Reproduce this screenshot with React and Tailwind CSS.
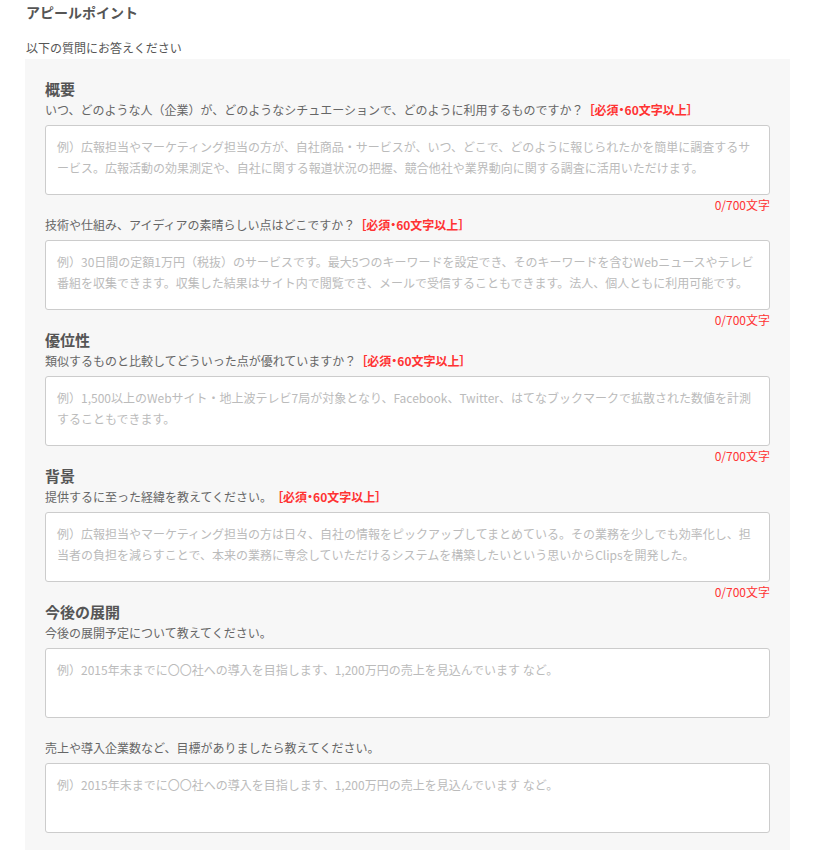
import React from "react";

const font = { fontFamily: '"Noto Sans CJK JP", "Noto Sans", sans-serif' };

function Req() {
  return (
    <span className="ml-[5px] font-bold text-[#ff3333] [font-feature-settings:'palt']">
      ［必須・60文字以上］
    </span>
  );
}

function Field({ question, required, placeholder, counter = true }) {
  return (
    <div className="flex flex-col">
      <div className="h-[20px] leading-[20px] text-[12px] text-[#666]">
        {question}
        {required && <Req />}
      </div>
      <textarea
        readOnly
        placeholder={placeholder}
        className="mt-[5px] h-[70px] w-full resize-none rounded-[3px] border border-[#cccccc] bg-white px-[11px] py-[10px] text-[12px] leading-[21px] text-[#555] placeholder:text-[#bbbbbb] outline-none"
        style={font}
      />
      <div className="h-[20px] text-right text-[12px] leading-[20px] text-[#ff3333]">
        {counter ? "0/700文字" : ""}
      </div>
    </div>
  );
}

function Heading({ children }) {
  return <div className="h-[21px] text-[15px] font-bold leading-[20px] text-[#555]">{children}</div>;
}

export default function App() {
  return (
    <div className="min-h-[850px] bg-white" style={font}>
      <div className="pl-[26px] pt-[2px] h-[22px] text-[14px] font-bold leading-[20px] text-[#555]">
        アピールポイント
      </div>
      <div className="pl-[26px] mt-[16px] h-[20px] text-[12px] leading-[20px] text-[#555]">
        以下の質問にお答えください
      </div>
      <div className="ml-[25px] mt-[1px] w-[765px] bg-[#f7f7f7] px-[20px] pt-[20px] pb-[20px]">
        <Heading>概要</Heading>
        <Field
          required
          question="いつ、どのような人（企業）が、どのようなシチュエーションで、どのように利用するものですか？"
          placeholder="例）広報担当やマーケティング担当の方が、自社商品・サービスが、いつ、どこで、どのように報じられたかを簡単に調査するサービス。広報活動の効果測定や、自社に関する報道状況の把握、競合他社や業界動向に関する調査に活用いただけます。"
        />
        <Field
          required
          question="技術や仕組み、アイディアの素晴らしい点はどこですか？"
          placeholder="例）30日間の定額1万円（税抜）のサービスです。最大5つのキーワードを設定でき、そのキーワードを含むWebニュースやテレビ番組を収集できます。収集した結果はサイト内で閲覧でき、メールで受信することもできます。法人、個人ともに利用可能です。"
        />
        <Heading>優位性</Heading>
        <Field
          required
          question="類似するものと比較してどういった点が優れていますか？"
          placeholder="例）1,500以上のWebサイト・地上波テレビ7局が対象となり、Facebook、Twitter、はてなブックマークで拡散された数値を計測することもできます。"
        />
        <Heading>背景</Heading>
        <Field
          required
          question="提供するに至った経緯を教えてください。"
          placeholder="例）広報担当やマーケティング担当の方は日々、自社の情報をピックアップしてまとめている。その業務を少しでも効率化し、担当者の負担を減らすことで、本来の業務に専念していただけるシステムを構築したいという思いからClipsを開発した。"
        />
        <Heading>今後の展開</Heading>
        <Field
          counter={false}
          question="今後の展開予定について教えてください。"
          placeholder="例）2015年末までに〇〇社への導入を目指します、1,200万円の売上を見込んでいます など。"
        />
        <Field
          counter={false}
          question="売上や導入企業数など、目標がありましたら教えてください。"
          placeholder="例）2015年末までに〇〇社への導入を目指します、1,200万円の売上を見込んでいます など。"
        />
      </div>
    </div>
  );
}
